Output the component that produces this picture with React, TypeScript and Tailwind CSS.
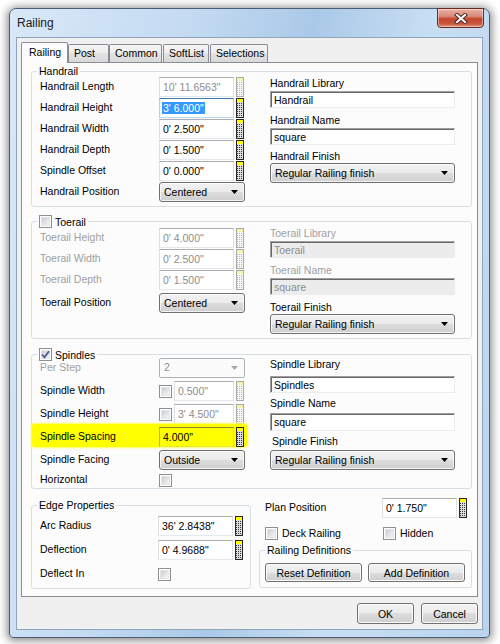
import React from "react";

const GRAD = "bg-[linear-gradient(#f2f2f2,#ebebeb_50%,#dddddd_50%,#cfcfcf)]";

function Calc({ off }: { off?: boolean }) {
  const stroke = off ? "#a9a9a9" : "#262626";
  const yellow = off ? "#f6f2a8" : "#ffff00";
  const dot = off ? "#b8b8b8" : "#3a3a3a";
  const fill = off ? "#f6f6f6" : "#dcdcdc";
  const dots: React.ReactNode[] = [];
  for (let r = 0; r < 7; r++)
    for (let c = 0; c < 3; c++)
      dots.push(<rect key={`${r}-${c}`} x={1 + c * 2} y={5 + r * 2} width="1" height="1" fill={dot} />);
  return (
    <svg width="8" height="20" viewBox="0 0 8 20" className="ml-[2px] shrink-0">
      <rect x="0.5" y="0.5" width="7" height="19" fill={fill} stroke={stroke} />
      <rect x="1" y="1" width="6" height="3" fill={yellow} />
      {dots}
    </svg>
  );
}

function Field({
  value,
  w = "w-[75px]",
  off,
  selected,
  hl,
}: {
  value: string;
  w?: string;
  off?: boolean;
  selected?: boolean;
  hl?: boolean;
}) {
  let cls = "border border-[#abadb3] border-l-[#dbdfe6] border-r-[#dbdfe6] border-b-[#e3e9ef] bg-white";
  if (selected) cls = "border border-[#3d7bad] border-l-[#b5cfe7] border-r-[#b5cfe7] border-b-[#b7d9ed] bg-white";
  if (hl) cls = "border border-[#8c8c1e] border-l-[#b4b43c] border-r-[#dede40] border-b-[#e6e640] bg-[#ffff00]";
  return (
    <div className={`h-[20px] ${w} ${cls} flex items-center pl-[2px] shrink-0 leading-[12px] whitespace-nowrap ${off ? "text-[#8d8d8d]" : "text-black"}`}>
      {selected ? <span className="bg-[#3399ff] text-white px-[1px]">{value}</span> : <span className="pl-[1px]">{value}</span>}
    </div>
  );
}

function Sunken({ value, off, h = "h-[17px]" }: { value: string; off?: boolean; h?: string }) {
  return (
    <div
      className={`${h} w-[185px] border border-t-[#a0a0a0] border-l-[#a0a0a0] border-b-[#ececec] border-r-[#ececec] shadow-[inset_1px_1px_0_#696969] ${off ? "bg-[#ececec] text-[#8d8d8d]" : "bg-white text-black"} flex items-center pl-[3px] leading-[12px]`}
    >
      {value}
    </div>
  );
}

function Arrow({ off }: { off?: boolean }) {
  return (
    <svg width="7" height="4" viewBox="0 0 7 4" className="shrink-0">
      <polygon points="0,0 7,0 3.5,4" fill={off ? "#a8a8a8" : "#000"} />
    </svg>
  );
}

function Combo({ value, w = "w-[86px]", off }: { value: string; w?: string; off?: boolean }) {
  if (off)
    return (
      <div className={`h-[20px] ${w} rounded-[2px] border border-[#adb2b5] bg-[#fbfbfb] flex items-center justify-between pl-[4px] pr-[6px] text-[#8d8d8d] shrink-0`}>
        <span>{value}</span>
        <Arrow off />
      </div>
    );
  return (
    <div className={`h-[20px] ${w} rounded-[3px] border border-[#707070] ${GRAD} shadow-[inset_0_0_0_1px_rgba(255,255,255,0.75)] flex items-center justify-between pl-[4px] pr-[6px] shrink-0 leading-[12px]`}>
      <span>{value}</span>
      <Arrow />
    </div>
  );
}

function Check({ checked }: { checked?: boolean }) {
  return (
    <div className="w-[13px] h-[13px] border border-[#8e8f8f] bg-white p-[1px] shrink-0 relative">
      <div className="w-full h-full bg-[linear-gradient(135deg,#cbcfd5,#f6f6f6)] border border-[#e4e4e4]" />
      {checked && (
        <svg width="11" height="11" viewBox="0 0 11 11" className="absolute left-0 top-0">
          <path d="M2 5.5 L4.5 8.3 L9 2.2" fill="none" stroke="#4a5c8c" strokeWidth="1.8" />
        </svg>
      )}
    </div>
  );
}

function Btn({ label, w }: { label: string; w: string }) {
  return (
    <div className={`${w} h-full rounded-[3px] border border-[#707070] ${GRAD} shadow-[inset_0_0_0_1px_#fbfbfb] flex items-center justify-center leading-[12px]`}>
      {label}
    </div>
  );
}

function Group({
  title,
  className = "",
  titleH = "h-[12px]",
  children,
}: {
  title: React.ReactNode;
  className?: string;
  titleH?: string;
  children: React.ReactNode;
}) {
  return (
    <div className={`border border-[#d5dfe5] rounded-[3px] ${className}`}>
      <div className={`-mt-[7px] ml-[5px] ${titleH} w-fit px-[2px] bg-[#fcfcfc] flex items-center gap-[3px] leading-[12px]`}>{title}</div>
      {children}
    </div>
  );
}

function Row({ label, off, children, cls = "" }: { label: string; off?: boolean; children: React.ReactNode; cls?: string }) {
  return (
    <div className={`flex items-center h-[20px] ${cls}`}>
      <div className={`w-[119px] shrink-0 whitespace-nowrap ${off ? "text-[#a0a0a0]" : ""}`}>{label}</div>
      {children}
    </div>
  );
}

function Lbl({ children, cls = "", off }: { children: React.ReactNode; cls?: string; off?: boolean }) {
  return <div className={`h-[12px] leading-[12px] whitespace-nowrap ${off ? "text-[#a0a0a0]" : ""} ${cls}`}>{children}</div>;
}

function CloseBtn() {
  return (
    <div className="-mt-[1px] mr-[5px] w-[47px] h-[20px] rounded-b-[4px] border border-[#6b2a1e] bg-[linear-gradient(#eab2a4,#d98a77_40%,#c4452e_55%,#c9533a_80%,#e0917a)] shadow-[inset_0_0_0_1px_rgba(255,255,255,0.45)] flex items-center justify-center shrink-0">
      <svg width="14" height="11" viewBox="0 0 14 11">
        <path d="M3 2 L11 9 M11 2 L3 9" stroke="#4a2a24" strokeWidth="4" strokeLinecap="square" />
        <path d="M3 2 L11 9 M11 2 L3 9" stroke="#ffffff" strokeWidth="2" strokeLinecap="square" />
      </svg>
    </div>
  );
}

function Tab({ label, w, selected, cls = "" }: { label: string; w: string; selected?: boolean; cls?: string }) {
  if (selected)
    return (
      <div className={`${w} h-[21px] relative z-10 border border-[#898c95] border-b-0 bg-[#fcfcfc] rounded-t-[2px] flex items-center pl-[7px] pb-[1px] ${cls}`}>
        {label}
      </div>
    );
  return (
    <div className={`${w} h-[18px] mb-[1px] border border-[#898c95] border-b-0 bg-[linear-gradient(#f6f6f6,#ececec_50%,#e2e2e2_50%,#d9d9d9)] rounded-t-[2px] flex items-center pl-[5px] ${cls}`}>
      {label}
    </div>
  );
}

export default function App() {
  return (
    <div className="w-[500px] h-[644px] bg-white overflow-hidden font-['Liberation_Sans',Arial,sans-serif] text-[10.5px] text-black pt-[8px] pl-[9px]">
      <div className="w-[481px] h-[630px] flex flex-col rounded-t-[7px] rounded-b-[4px] border border-[#4a5d74] bg-[linear-gradient(100deg,#d8e8f7_0%,#c5dbf2_30%,#aac9e8_52%,#c8def3_72%,#bad4ee_100%)] shadow-[0_1px_9px_2px_rgba(0,0,0,0.45)]">
        <div className="h-[28px] flex justify-between items-start shrink-0">
          <div className="pl-[7px] pt-[7px] text-[12px] leading-[14px] text-[#1a1a1a]">Railing</div>
          <CloseBtn />
        </div>
        <div className="flex-1 mx-[6px] mb-[7px] bg-[#f0f0f0] border border-[#8fa5bd] flex flex-col pt-[4px] px-[4px]">
          {/* tabs */}
          <div className="flex items-end h-[21px]">
            <Tab label="Railing" w="w-[47px]" selected />
            <Tab label="Post" w="w-[41px]" />
            <Tab label="Common" w="w-[53px]" />
            <Tab label="SoftList" w="w-[46px]" cls="ml-[1px]" />
            <Tab label="Selections" w="w-[58px]" cls="ml-[1px]" />
          </div>
          {/* panel */}
          <div className="-mt-[1px] w-[457px] h-[535px] border border-[#898c95] bg-[#fcfcfc] flex flex-col">
            {/* Handrail */}
            <Group title="Handrail" className="ml-[9px] mt-[8px] w-[441px]">
              <div className="flex pl-[8px] pb-[4px]">
                <div className="w-[204px] flex flex-col gap-[1px]">
                  <Row label="Handrail Length">
                    <Field value={`10' 11.6563"`} off />
                    <Calc off />
                  </Row>
                  <Row label="Handrail Height">
                    <Field value={`3' 6.000"`} selected />
                    <Calc />
                  </Row>
                  <Row label="Handrail Width">
                    <Field value={`0' 2.500"`} />
                    <Calc />
                  </Row>
                  <Row label="Handrail Depth">
                    <Field value={`0' 1.500"`} />
                    <Calc />
                  </Row>
                  <Row label="Spindle Offset">
                    <Field value={`0' 0.000"`} />
                    <Calc />
                  </Row>
                  <Row label="Handrail Position">
                    <Combo value="Centered" />
                  </Row>
                </div>
                <div className="ml-[26px] w-[185px] flex flex-col">
                  <Lbl>Handrail Library</Lbl>
                  <div className="mt-[2px]">
                    <Sunken value="Handrail" />
                  </div>
                  <Lbl cls="mt-[6px]">Handrail Name</Lbl>
                  <div className="mt-[2px]">
                    <Sunken value="square" />
                  </div>
                  <Lbl cls="mt-[5px]">Handrail Finish</Lbl>
                  <div className="mt-[1px]">
                    <Combo value="Regular Railing finish" w="w-[185px]" />
                  </div>
                </div>
              </div>
            </Group>

            {/* Toerail */}
            <Group
              title={
                <>
                  <Check />
                  <span>Toerail</span>
                </>
              }
              titleH="h-[13px]"
              className="ml-[9px] mt-[14px] w-[441px]"
            >
              <div className="flex pl-[8px] pb-[4px]">
                <div className="w-[204px] flex flex-col gap-[1px]">
                  <Row label="Toerail Height" off>
                    <Field value={`0' 4.000"`} off />
                    <Calc off />
                  </Row>
                  <Row label="Toerail Width" off>
                    <Field value={`0' 2.500"`} off />
                    <Calc off />
                  </Row>
                  <Row label="Toerail Depth" off>
                    <Field value={`0' 1.500"`} off />
                    <Calc off />
                  </Row>
                  <Row label="Toerail Position" cls="mt-[2px]">
                    <Combo value="Centered" />
                  </Row>
                </div>
                <div className="ml-[26px] w-[185px] flex flex-col -mt-[1px]">
                  <Lbl off>Toerail Library</Lbl>
                  <div className="mt-[2px]">
                    <Sunken value="Toerail" off />
                  </div>
                  <Lbl cls="mt-[6px]" off>
                    Toerail Name
                  </Lbl>
                  <div className="mt-[2px]">
                    <Sunken value="square" off />
                  </div>
                  <Lbl cls="mt-[6px]">Toerail Finish</Lbl>
                  <div className="mt-[1px]">
                    <Combo value="Regular Railing finish" w="w-[185px]" />
                  </div>
                </div>
              </div>
            </Group>

            {/* Spindles */}
            <Group
              title={
                <>
                  <Check checked />
                  <span>Spindles</span>
                </>
              }
              titleH="h-[13px]"
              className="ml-[9px] mt-[15px] w-[441px]"
            >
              <div className="flex pl-[8px] pb-[1px] -mt-[3px]">
                <div className="w-[204px] flex flex-col gap-[3px]">
                  <Row label="Per Step" off>
                    <Combo value="2" off />
                  </Row>
                  <Row label="Spindle Width">
                    <Check />
                    <div className="ml-[2px]">
                      <Field value={`0.500"`} w="w-[60px]" off />
                    </div>
                    <Calc off />
                  </Row>
                  <Row label="Spindle Height">
                    <Check />
                    <div className="ml-[2px]">
                      <Field value={`3' 4.500"`} w="w-[60px]" off />
                    </div>
                    <Calc off />
                  </Row>
                  <div className="flex items-center h-[23px] -mt-[3px] pt-[3px] -ml-[8px] pl-[8px] -mr-[3px] pr-[3px] bg-[#ffff00] rounded-[3px] shadow-[0_0_2px_1px_#ffff5a]">
                    <div className="w-[119px] shrink-0 whitespace-nowrap">Spindle Spacing</div>
                    <Field value={`4.000"`} hl />
                    <Calc />
                  </div>
                  <Row label="Spindle Facing">
                    <Combo value="Outside" />
                  </Row>
                  <div className="flex items-center h-[14px]">
                    <div className="w-[119px] shrink-0">Horizontal</div>
                    <Check />
                  </div>
                </div>
                <div className="ml-[26px] w-[185px] flex flex-col">
                  <Lbl>Spindle Library</Lbl>
                  <div className="mt-[6px]">
                    <Sunken value="Spindles" />
                  </div>
                  <Lbl cls="mt-[4px]">Spindle Name</Lbl>
                  <div className="mt-[4px]">
                    <Sunken value="square" h="h-[18px]" />
                  </div>
                  <Lbl cls="mt-[4px] pl-[2px]">Spindle Finish</Lbl>
                  <div className="mt-[3px]">
                    <Combo value="Regular Railing finish" w="w-[185px]" />
                  </div>
                </div>
              </div>
            </Group>

            {/* bottom */}
            <div className="flex items-start">
              <Group title="Edge Properties" className="ml-[9px] mt-[16px] w-[220px]">
                <div className="flex flex-col gap-[4px] pl-[8px] pb-[4px] mt-[5px]">
                  <div className="flex items-center h-[20px]">
                    <div className="w-[118px] shrink-0">Arc Radius</div>
                    <Field value={`36' 2.8438"`} />
                    <Calc />
                  </div>
                  <div className="flex items-center h-[20px]">
                    <div className="w-[118px] shrink-0">Deflection</div>
                    <Field value={`0' 4.9688"`} />
                    <Calc />
                  </div>
                  <div className="flex items-center h-[20px]">
                    <div className="w-[118px] shrink-0">Deflect In</div>
                    <Check />
                  </div>
                </div>
              </Group>
              <div className="ml-[8px] mt-[9px] w-[213px] flex flex-col">
                <div className="flex items-center h-[20px]">
                  <div className="w-[123px] pl-[6px] shrink-0">Plan Position</div>
                  <Field value={`0' 1.750"`} />
                  <Calc />
                </div>
                <div className="flex items-center h-[13px] mt-[9px] pl-[6px]">
                  <div className="w-[118px] flex items-center gap-[4px] shrink-0">
                    <Check />
                    <span>Deck Railing</span>
                  </div>
                  <div className="flex items-center gap-[4px]">
                    <Check />
                    <span>Hidden</span>
                  </div>
                </div>
                <Group title="Railing Definitions" className="mt-[10px]">
                  <div className="flex h-[19px] gap-[6px] pl-[5px] mt-[7px] mb-[5px]">
                    <Btn label="Reset Definition" w="w-[97px]" />
                    <Btn label="Add Definition" w="w-[97px]" />
                  </div>
                </Group>
              </div>
            </div>
          </div>
          {/* OK / Cancel */}
          <div className="w-[457px] flex justify-end gap-[7px] mt-[6px] h-[21px]">
            <Btn label="OK" w="w-[57px]" />
            <Btn label="Cancel" w="w-[57px]" />
          </div>
        </div>
      </div>
    </div>
  );
}
